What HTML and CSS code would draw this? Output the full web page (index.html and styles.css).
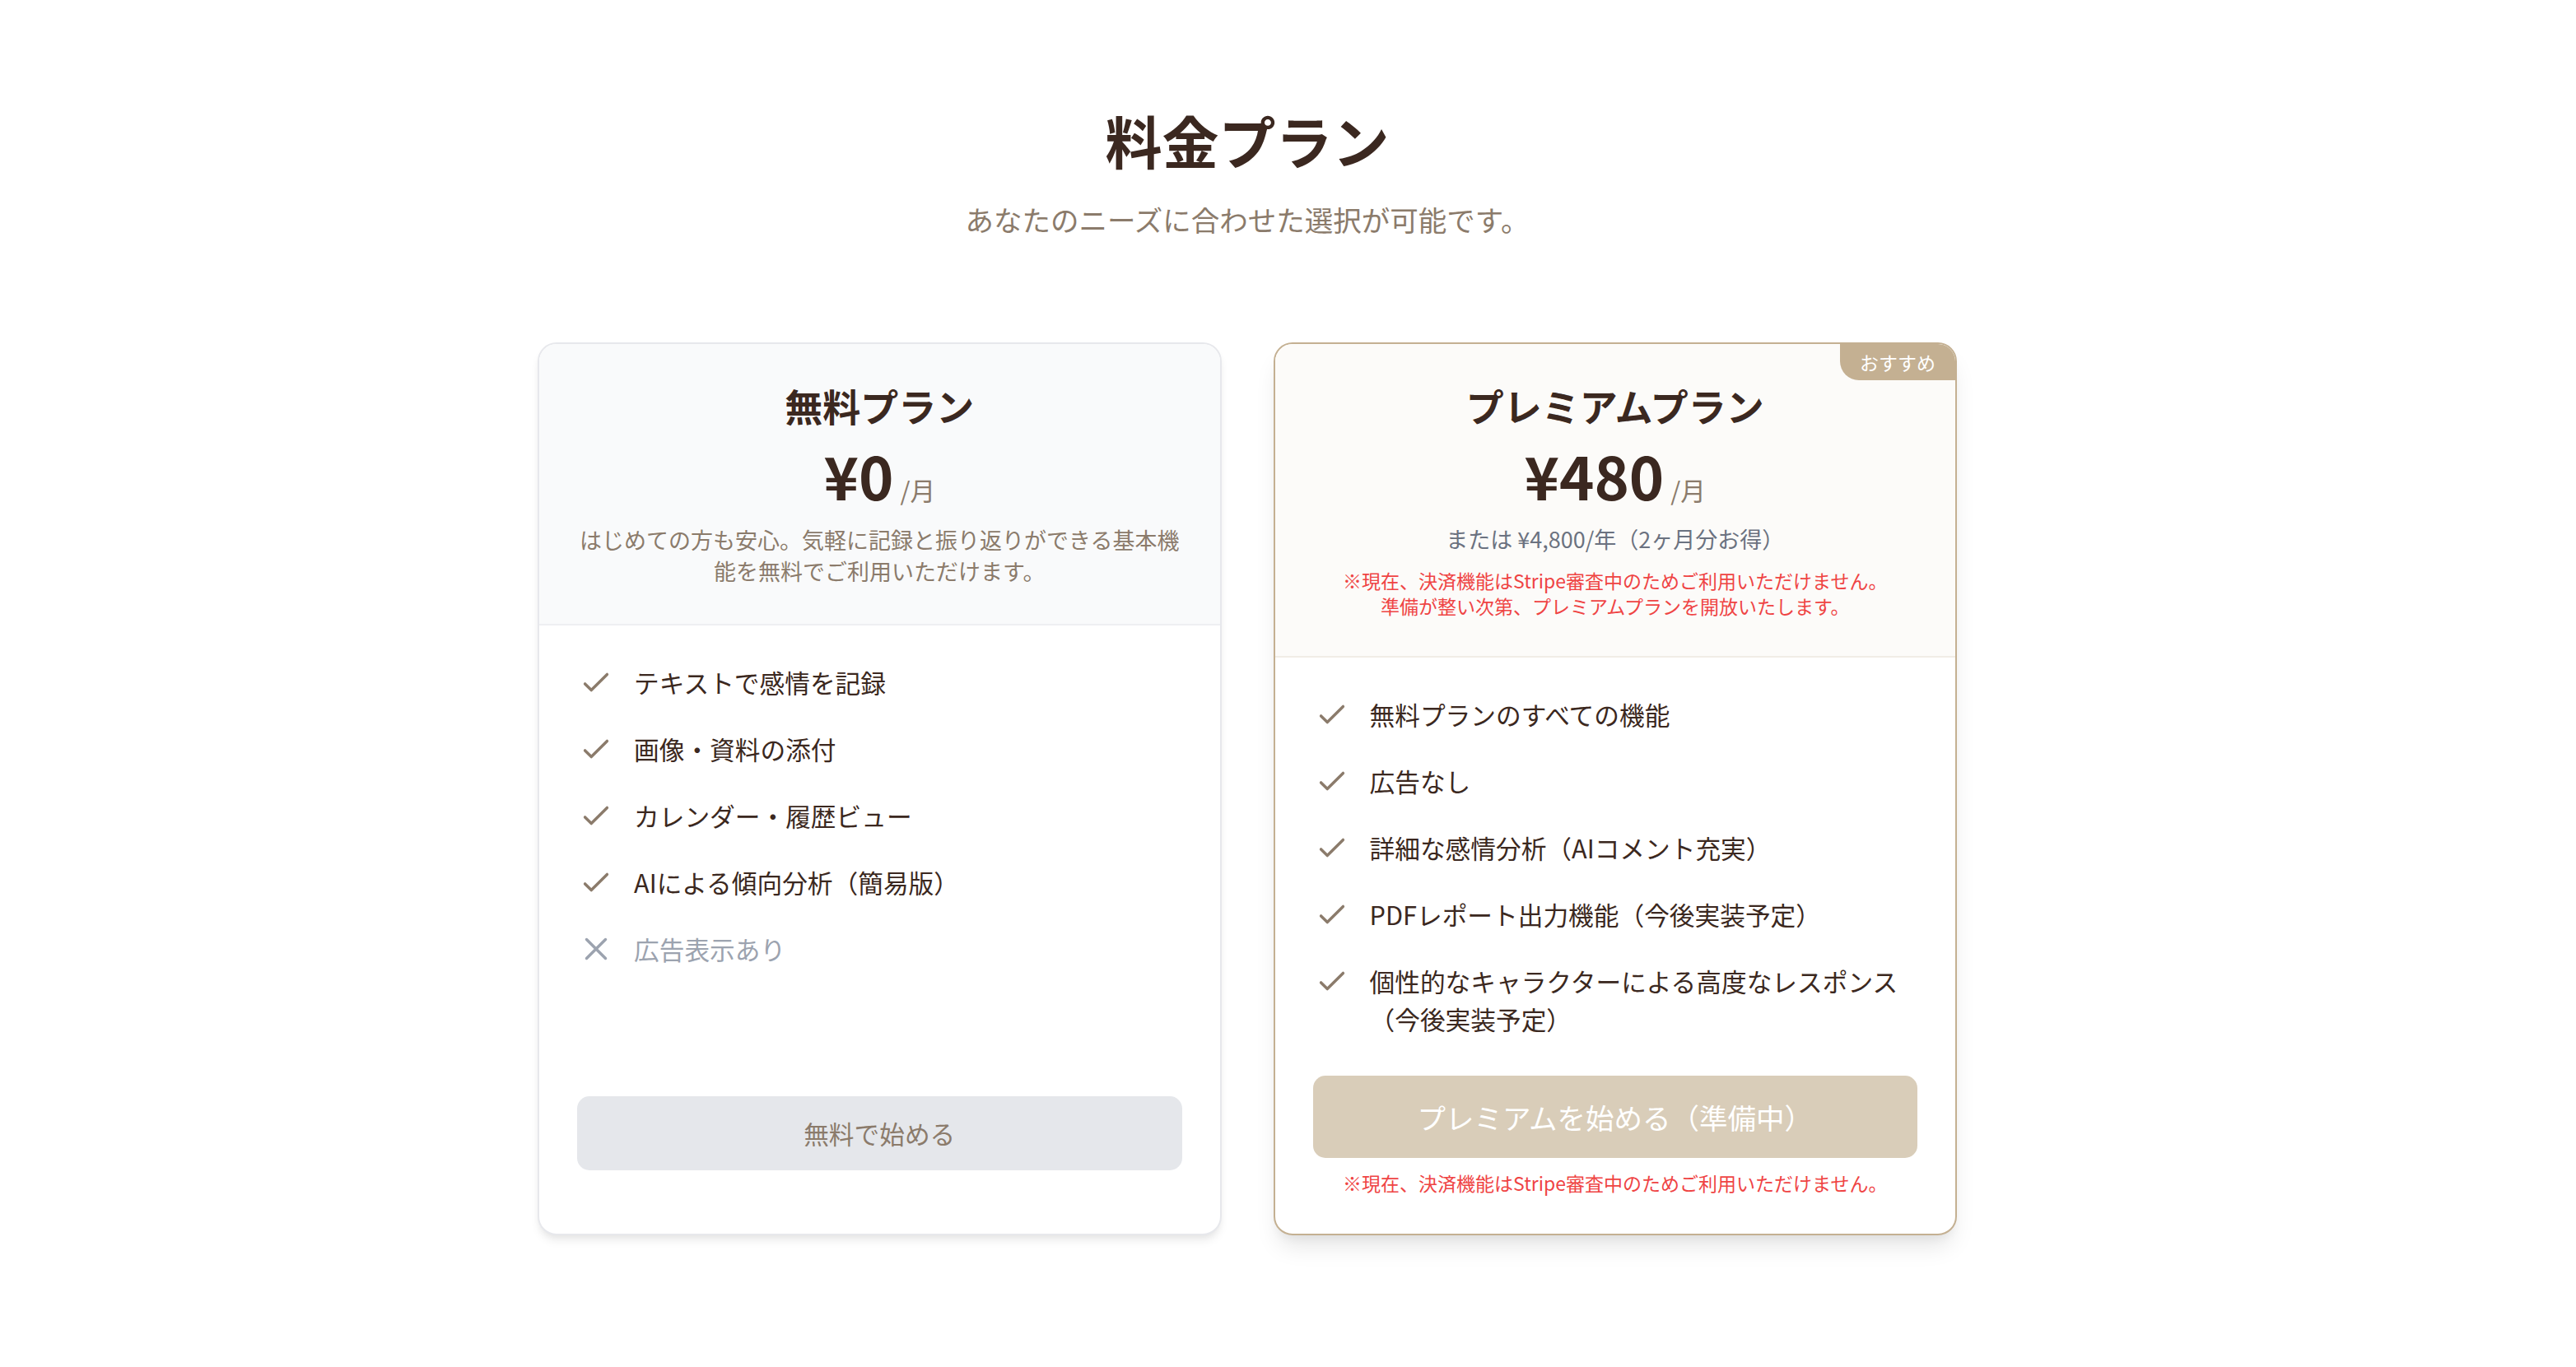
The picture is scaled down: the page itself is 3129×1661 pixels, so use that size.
FILE: index.html
```html
<!DOCTYPE html>
<html lang="ja">
<head>
<meta charset="utf-8">
<title>料金プラン</title>
<link rel="stylesheet" href="styles.css">
</head>
<body>
<main class="page">
  <header class="intro">
    <h1 class="intro-title">料金プラン</h1>
    <p class="intro-sub">あなたのニーズに合わせた選択が可能です。</p>
  </header>

  <section class="plans">
    <article class="card card-free">
      <div class="card-head">
        <h2 class="plan-name">無料プラン</h2>
        <div class="price"><span class="amount">¥0</span><span class="per">/月</span></div>
        <p class="desc">はじめての方も安心。気軽に記録と振り返りができる基本機能を無料でご利用いただけます。</p>
      </div>
      <div class="card-body">
        <ul class="features">
          <li class="feat"><svg class="ico ico-check" viewBox="0 0 24 24"><path d="M5 13l4 4L19 7"/></svg><span>テキストで感情を記録</span></li>
          <li class="feat"><svg class="ico ico-check" viewBox="0 0 24 24"><path d="M5 13l4 4L19 7"/></svg><span>画像・資料の添付</span></li>
          <li class="feat"><svg class="ico ico-check" viewBox="0 0 24 24"><path d="M5 13l4 4L19 7"/></svg><span>カレンダー・履歴ビュー</span></li>
          <li class="feat"><svg class="ico ico-check" viewBox="0 0 24 24"><path d="M5 13l4 4L19 7"/></svg><span>AIによる傾向分析（簡易版）</span></li>
          <li class="feat feat-off"><svg class="ico ico-x" viewBox="0 0 24 24"><path d="M6 18L18 6M6 6l12 12"/></svg><span>広告表示あり</span></li>
        </ul>
        <button class="btn btn-free" type="button">無料で始める</button>
        <div class="spacer"></div>
      </div>
    </article>

    <article class="card card-premium">
      <span class="badge">おすすめ</span>
      <div class="card-head">
        <h2 class="plan-name">プレミアムプラン</h2>
        <div class="price"><span class="amount">¥480</span><span class="per">/月</span></div>
        <p class="yearly">または ¥4,800/年（2ヶ月分お得）</p>
        <p class="note note-head">※現在、決済機能はStripe審査中のためご利用いただけません。<br>準備が整い次第、プレミアムプランを開放いたします。</p>
      </div>
      <div class="card-body">
        <ul class="features">
          <li class="feat"><svg class="ico ico-check" viewBox="0 0 24 24"><path d="M5 13l4 4L19 7"/></svg><span>無料プランのすべての機能</span></li>
          <li class="feat"><svg class="ico ico-check" viewBox="0 0 24 24"><path d="M5 13l4 4L19 7"/></svg><span>広告なし</span></li>
          <li class="feat"><svg class="ico ico-check" viewBox="0 0 24 24"><path d="M5 13l4 4L19 7"/></svg><span>詳細な感情分析（AIコメント充実）</span></li>
          <li class="feat"><svg class="ico ico-check" viewBox="0 0 24 24"><path d="M5 13l4 4L19 7"/></svg><span>PDFレポート出力機能（今後実装予定）</span></li>
          <li class="feat"><svg class="ico ico-check" viewBox="0 0 24 24"><path d="M5 13l4 4L19 7"/></svg><span>個性的なキャラクターによる高度なレスポンス（今後実装予定）</span></li>
        </ul>
        <button class="btn btn-premium" type="button">プレミアムを始める（準備中）</button>
        <p class="note note-foot">※現在、決済機能はStripe審査中のためご利用いただけません。</p>
      </div>
    </article>
  </section>
</main>
</body>
</html>
```

FILE: styles.css
```css
* { box-sizing: border-box; }

html, body {
  margin: 0;
  padding: 0;
  background: #ffffff;
}

body {
  font-family: "Noto Sans CJK JP", "Noto Sans", sans-serif;
  color: #3b2820;
}

.page {
  padding: 132px 99px 120px 0;
}

.intro {
  text-align: center;
}

.intro-title {
  margin: 0;
  font-size: 69px;
  line-height: 77px;
  font-weight: 700;
  color: #3b2820;
}

.intro-sub {
  margin: 30px 0 0;
  font-size: 34.5px;
  line-height: 54px;
  color: #8b7b6b;
}

.plans {
  width: 1724px;
  margin: 123px auto 0;
  display: grid;
  grid-template-columns: 1fr 1fr;
  gap: 63px;
}

.card {
  position: relative;
  display: flex;
  flex-direction: column;
  background: #ffffff;
  border-radius: 23px;
  overflow: hidden;
}

.card-free {
  border: 2px solid #e7e8ec;
  box-shadow: 0 8px 12px -2px rgba(0, 0, 0, 0.08), 0 4px 8px -3px rgba(0, 0, 0, 0.05);
}

.card-premium {
  border: 2px solid #c4b092;
  box-shadow: 0 19px 29px -6px rgba(0, 0, 0, 0.1), 0 8px 12px -4px rgba(0, 0, 0, 0.05);
}

.card-head {
  padding: 44px 46px 45px;
  text-align: center;
  border-bottom: 2px solid #eeeff2;
}

.card-free .card-head {
  background: #f9fafb;
}

.card-premium .card-head {
  background: #fcfbf9;
  border-bottom-color: #f1ede6;
}

.plan-name {
  margin: 0;
  font-size: 46px;
  line-height: 61px;
  font-weight: 700;
  color: #3b2820;
}

.price {
  margin-top: 15px;
  display: flex;
  justify-content: center;
  align-items: baseline;
  line-height: 77px;
  height: 77px;
}

.amount {
  font-size: 72px;
  font-weight: 700;
  color: #3b2820;
}

.per {
  margin-left: 8px;
  font-size: 30.7px;
  color: #8b7b6b;
}

.desc {
  margin: 22px 0 0;
  font-size: 27px;
  line-height: 38px;
  color: #8b7b6b;
}

.yearly {
  margin: 21px 0 0;
  font-size: 27px;
  line-height: 38px;
  color: #6b7280;
}

.note {
  margin: 0;
  font-size: 23px;
  line-height: 31px;
  color: #ef4444;
}

.note-head {
  margin-top: 16px;
}

.note-foot {
  margin-top: 15px;
  text-align: center;
}

.card-body {
  flex: 1;
  display: flex;
  flex-direction: column;
  padding: 46px;
}

.features {
  list-style: none;
  margin: 0;
  padding: 0;
  flex: 1;
  display: flex;
  flex-direction: column;
  gap: 35px;
}

.feat {
  display: flex;
  align-items: flex-start;
  font-size: 30.7px;
  line-height: 46px;
  color: #3b2820;
}

.feat span {
  margin-left: 23px;
}

.ico {
  flex: none;
  width: 46px;
  height: 46px;
  fill: none;
  stroke-width: 1.8;
  stroke-linecap: round;
  stroke-linejoin: round;
}

.ico-check {
  stroke: #8b7b6b;
}

.ico-x {
  stroke: #9ca3af;
}

.feat-off {
  color: #9ca3af;
}

.btn {
  display: block;
  width: 100%;
  border: 0;
  font-family: inherit;
  text-align: center;
  border-radius: 15px;
}

.btn-free {
  margin-top: 46px;
  padding: 22px 0;
  font-size: 30.7px;
  line-height: 46px;
  background: #e5e7eb;
  color: #8b7b6b;
}

.spacer {
  height: 31px;
}

.btn-premium {
  margin-top: 46px;
  padding: 23px 0;
  font-size: 34.5px;
  line-height: 54px;
  background: #d9cdb9;
  color: #ffffff;
}

.badge {
  position: absolute;
  top: 0;
  right: 0;
  padding: 7px 24px;
  font-size: 23px;
  line-height: 30px;
  color: #ffffff;
  background: #c4b092;
  border-bottom-left-radius: 23px;
}
```
